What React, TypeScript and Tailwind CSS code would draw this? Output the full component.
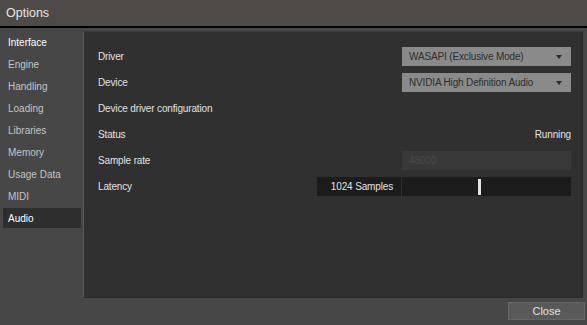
import React from "react";

const items = ["Interface", "Engine", "Handling", "Loading", "Libraries", "Memory", "Usage Data", "MIDI", "Audio"];

function Arrow() {
  return (
    <svg width="6" height="4" viewBox="0 0 6 4" className="mr-[9px] shrink-0">
      <polygon points="0,0 6,0 3,4" fill="#2a2a2a" />
    </svg>
  );
}

export default function App() {
  return (
    <div
      className="w-[587px] h-[325px] bg-[#474747] flex flex-col overflow-hidden text-[10px] text-[#d6d6d6] tracking-[-0.15px]"
      style={{ fontFamily: '"Liberation Sans", Arial, sans-serif' }}
    >
      <div className="h-[28px] bg-[#4d4a48] border-b-2 border-black flex items-center pl-[6px] text-[12.5px] text-[#e6e6e6] tracking-normal">
        Options
      </div>
      <div className="flex pt-[3px] h-[270px]">
        <div className="w-[83px] pl-[3px] pr-[2px] pt-[1px] flex flex-col gap-[2px]">
          {items.map((it) => (
            <div
              key={it}
              className={
                "h-[20px] flex items-center pl-[5px] tracking-normal " +
                (it === "Audio"
                  ? "bg-[#2e2e2e] text-white"
                  : it === "Interface"
                  ? "text-white"
                  : "text-[#c4c4c4]")
              }
            >
              {it}
            </div>
          ))}
        </div>
        <div className="w-[500px] h-[267px] bg-[#303030] border border-[#2a2a2a] border-l-[#5a5a5a] border-t-[#3a3a3a] pt-[15px] pl-[14px] pr-[11px] flex flex-col gap-[7px]">
          <div className="h-[19px] flex items-center justify-between">
            <span className="text-[#e2e2e2]">Driver</span>
            <div className="w-[169px] h-[19px] bg-[#8a8a8a] flex items-center justify-between pl-[7px] text-[#2e2e2e]">
              <span>WASAPI (Exclusive Mode)</span>
              <Arrow />
            </div>
          </div>
          <div className="h-[19px] flex items-center justify-between">
            <span className="text-[#e2e2e2]">Device</span>
            <div className="w-[169px] h-[19px] bg-[#8a8a8a] flex items-center justify-between pl-[7px] text-[#2e2e2e]">
              <span className="whitespace-nowrap">NVIDIA High Definition Audio</span>
              <Arrow />
            </div>
          </div>
          <div className="h-[19px] flex items-center">
            <span className="text-[#e2e2e2]">Device driver configuration</span>
          </div>
          <div className="h-[19px] flex items-center justify-between">
            <span className="text-[#e2e2e2]">Status</span>
            <span className="text-[#e2e2e2]">Running</span>
          </div>
          <div className="h-[19px] flex items-center justify-between">
            <span className="text-[#e2e2e2]">Sample rate</span>
            <div className="w-[169px] h-[19px] bg-[#393939] flex items-center pl-[7px] text-[#4a4a4a]">48000</div>
          </div>
          <div className="h-[19px] flex items-center justify-between">
            <span className="text-[#e2e2e2]">Latency</span>
            <div className="flex h-[19px] gap-[1px]">
              <div className="w-[84px] bg-[#1c1c1c] flex items-center justify-end pr-[8px] text-[#e2e2e2]">1024 Samples</div>
              <div className="w-[169px] bg-[#1c1c1c] flex items-center pl-[76px]">
                <div className="w-[3px] h-[16px] bg-[#e4e4e4]" />
              </div>
            </div>
          </div>
        </div>
      </div>
      <div className="flex justify-end pt-[4px] pr-[2px]">
        <div className="w-[77px] h-[18px] bg-[#595959] border border-[#666] flex items-center justify-center text-[#e0e0e0] text-[11px] tracking-normal">
          Close
        </div>
      </div>
    </div>
  );
}
